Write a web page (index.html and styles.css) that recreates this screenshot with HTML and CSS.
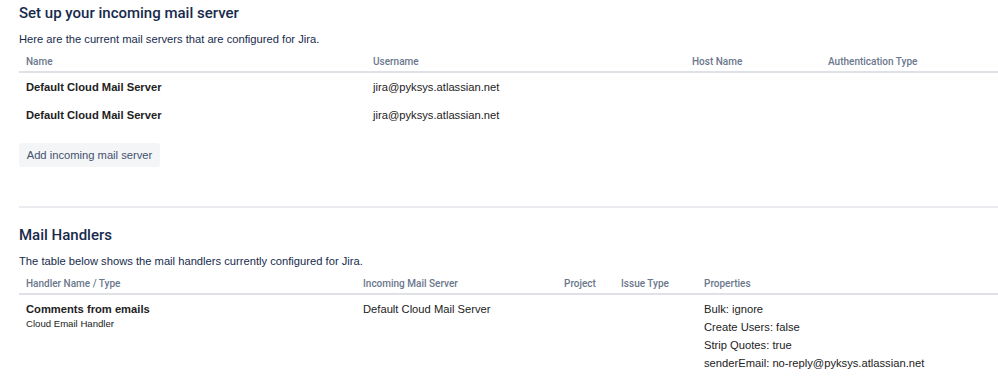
FILE: index.html
```html
<!DOCTYPE html>
<html lang="en">
<head>
    <meta charset="UTF-8">
    <title>Incoming mail</title>
    <link rel="stylesheet" href="styles.css">
</head>
<body>
    <div class="page">
        <h1 class="section-title">Set up your incoming mail server</h1>
        <p class="section-desc">Here are the current mail servers that are configured for Jira.</p>

        <table class="data-table servers-table">
            <colgroup>
                <col style="width: 347px">
                <col style="width: 319px">
                <col style="width: 136px">
                <col>
            </colgroup>
            <thead>
                <tr>
                    <th>Name</th>
                    <th>Username</th>
                    <th>Host Name</th>
                    <th>Authentication Type</th>
                </tr>
            </thead>
            <tbody>
                <tr>
                    <td class="strong">Default Cloud Mail Server</td>
                    <td>jira@pyksys.atlassian.net</td>
                    <td></td>
                    <td></td>
                </tr>
                <tr>
                    <td class="strong">Default Cloud Mail Server</td>
                    <td>jira@pyksys.atlassian.net</td>
                    <td></td>
                    <td></td>
                </tr>
            </tbody>
        </table>

        <button type="button" class="btn">Add incoming mail server</button>

        <hr class="divider">

        <h2 class="section-title">Mail Handlers</h2>
        <p class="section-desc">The table below shows the mail handlers currently configured for Jira.</p>

        <table class="data-table handlers-table">
            <colgroup>
                <col style="width: 337px">
                <col style="width: 201px">
                <col style="width: 57px">
                <col style="width: 83px">
                <col>
            </colgroup>
            <thead>
                <tr>
                    <th>Handler Name / Type</th>
                    <th>Incoming Mail Server</th>
                    <th>Project</th>
                    <th>Issue Type</th>
                    <th>Properties</th>
                </tr>
            </thead>
            <tbody>
                <tr>
                    <td>
                        <div class="strong">Comments from emails</div>
                        <div class="sub">Cloud Email Handler</div>
                    </td>
                    <td>Default Cloud Mail Server</td>
                    <td></td>
                    <td></td>
                    <td>
                        <ul class="props">
                            <li>Bulk: ignore</li>
                            <li>Create Users: false</li>
                            <li>Strip Quotes: true</li>
                            <li>senderEmail: no-reply@pyksys.atlassian.net</li>
                        </ul>
                    </td>
                </tr>
            </tbody>
        </table>
    </div>
</body>
</html>
```

FILE: styles.css
```css
body {
    margin: 0;
    font-family: 'Liberation Sans', Arial, sans-serif;
    font-size: 11.2px;
    color: #172b4d;
    background: #fff;
}

.page {
    padding: 3px 0 0 19px;
}

.section-title {
    margin: 0;
    font-family: Roboto, 'Liberation Sans', sans-serif;
    font-size: 15px;
    line-height: 20px;
    font-weight: 500;
    color: #172b4d;
}

.section-desc {
    margin: 8px 0 4px;
    line-height: 16px;
}

.data-table {
    width: 979px;
    table-layout: fixed;
    border-collapse: collapse;
}

.data-table th {
    text-align: left;
    font-family: Roboto, 'Liberation Sans', sans-serif;
    font-weight: 500;
    font-size: 10px;
    line-height: 14px;
    color: #6b778c;
    padding: 4px 7px 2px;
    border-bottom: 2px solid #dfe1e6;
}

.data-table td {
    padding: 5px 7px;
    line-height: 18px;
    vertical-align: top;
    color: #222;
}

.strong {
    font-weight: bold;
}

.sub {
    font-size: 9.6px;
    line-height: 12px;
}

.props {
    list-style: none;
    margin: 0;
    padding: 0;
}

.btn {
    display: block;
    margin-top: 14px;
    height: 24px;
    width: 141px;
    padding: 0;
    border: none;
    border-radius: 3px;
    background: #f4f5f7;
    color: #42526e;
    font-family: inherit;
    font-size: 11.2px;
}

.divider {
    margin: 39px 0 17px;
    border: none;
    height: 2px;
    background: #ebecf0;
}
```
